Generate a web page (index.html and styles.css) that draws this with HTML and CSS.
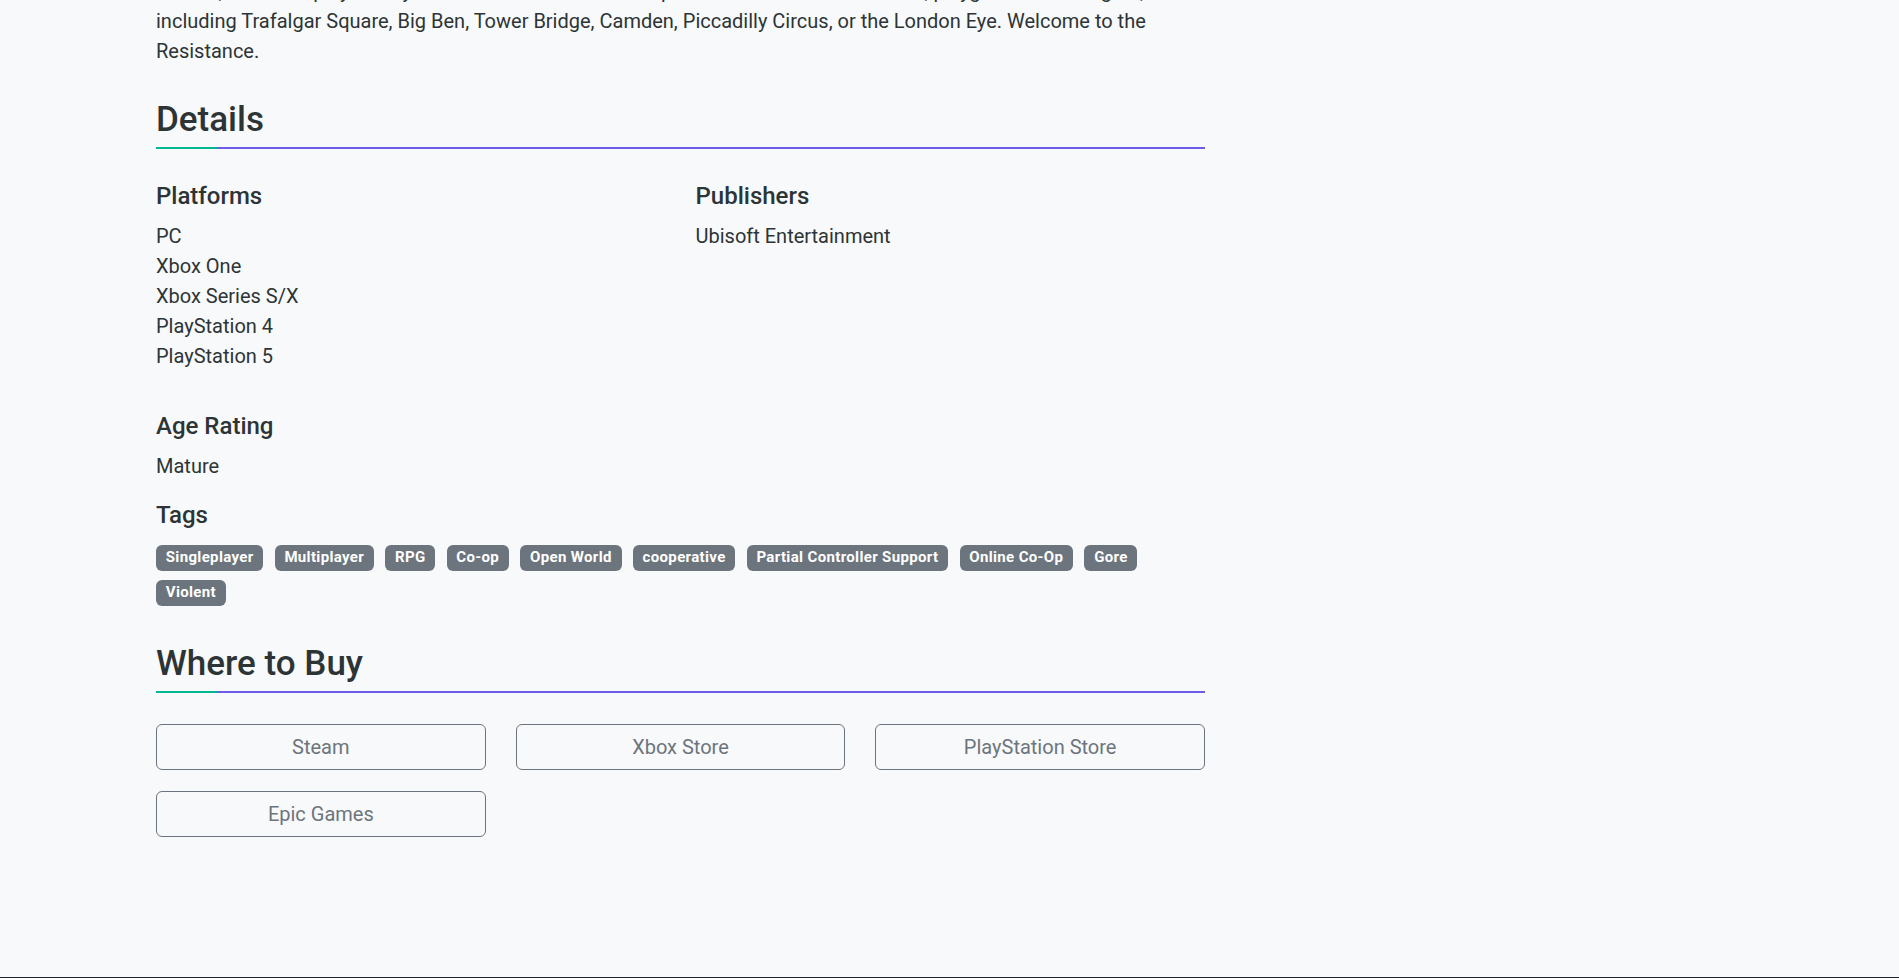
FILE: index.html
```html
<!DOCTYPE html>
<html lang="en">
<head>
<meta charset="utf-8">
<title>Watch Dogs: Legion</title>
<link rel="stylesheet" href="styles.css">
</head>
<body>
<main class="page">
  <section class="about">
    <p class="desc">Recruit, hack and play as anyone in a near-future London packed with iconic landmarks, playgrounds and sights,<br>including Trafalgar Square, Big Ben, Tower Bridge, Camden, Piccadilly Circus, or the London Eye. Welcome to the<br>Resistance.</p>
  </section>

  <section class="details">
    <h2 class="section-title">Details</h2>
    <div class="detail-grid">
      <div class="detail-block">
        <h4 class="detail-title">Platforms</h4>
        <ul class="detail-list">
          <li>PC</li>
          <li>Xbox One</li>
          <li>Xbox Series S/X</li>
          <li>PlayStation 4</li>
          <li>PlayStation 5</li>
        </ul>
      </div>
      <div class="detail-block">
        <h4 class="detail-title">Publishers</h4>
        <ul class="detail-list">
          <li>Ubisoft Entertainment</li>
        </ul>
      </div>
    </div>
    <div class="detail-block age">
      <h4 class="detail-title">Age Rating</h4>
      <p class="detail-text">Mature</p>
    </div>
    <div class="detail-block tags-block">
      <h4 class="detail-title">Tags</h4>
      <div class="tags">
        <span class="badge">Singleplayer</span>
        <span class="badge">Multiplayer</span>
        <span class="badge">RPG</span>
        <span class="badge">Co-op</span>
        <span class="badge">Open World</span>
        <span class="badge">cooperative</span>
        <span class="badge">Partial Controller Support</span>
        <span class="badge">Online Co-Op</span>
        <span class="badge">Gore</span>
        <span class="badge">Violent</span>
      </div>
    </div>
  </section>

  <section class="buy">
    <h2 class="section-title">Where to Buy</h2>
    <div class="stores">
      <a class="store-btn" href="#">Steam</a>
      <a class="store-btn" href="#">Xbox Store</a>
      <a class="store-btn" href="#">PlayStation Store</a>
      <a class="store-btn" href="#">Epic Games</a>
    </div>
  </section>
</main>
<footer class="site-footer"></footer>
</body>
</html>
```

FILE: styles.css
```css
* { box-sizing: border-box; }

html, body {
  margin: 0;
  padding: 0;
}

body {
  background: #f8f9fa;
  color: #2d3436;
  font-family: "Segoe UI", Roboto, "Noto Sans", "Liberation Sans", sans-serif;
  font-size: 20px;
  line-height: 30px;
}

.page {
  width: 1049px;
  margin-left: 156px;
  margin-top: -24.4px;
}

.desc {
  margin: 0;
  white-space: nowrap;
}

.section-title {
  margin: 0;
  font-size: 35px;
  line-height: 42px;
  font-weight: 500;
  padding-bottom: 8px;
  color: #2d3436;
  background: linear-gradient(to right, #00b894 0, #00b894 61px, #6c5ce7 61px, #6c5ce7 100%) left bottom / 100% 2px no-repeat;
}

.details .section-title {
  margin-top: 33.4px;
}

.detail-grid {
  display: grid;
  grid-template-columns: 1fr 1fr;
  column-gap: 30px;
  margin-top: 32.7px;
}

.detail-title {
  margin: 0;
  font-size: 24px;
  line-height: 28.8px;
  font-weight: 500;
}

.detail-list {
  list-style: none;
  margin: 10.5px 0 0;
  padding: 0;
}

.detail-text {
  margin: 10.6px 0 0;
}

.age {
  margin-top: 40.6px;
}

.tags-block {
  margin-top: 20.3px;
}

.tags {
  display: flex;
  flex-wrap: wrap;
  column-gap: 11.3px;
  row-gap: 9.5px;
  margin-top: 15px;
}

.badge {
  display: inline-block;
  background: #6c757d;
  color: #fff;
  font-size: 15px;
  line-height: 15px;
  font-weight: 700;
  letter-spacing: 0.35px;
  padding: 5.25px 9.75px;
  border-radius: 6px;
  white-space: nowrap;
}

.buy .section-title {
  margin-top: 37.5px;
}

.stores {
  display: grid;
  grid-template-columns: repeat(3, 1fr);
  column-gap: 30px;
  row-gap: 21px;
  margin-top: 30.5px;
}

.store-btn {
  display: block;
  height: 46px;
  padding: 7px 12px;
  border: 1px solid #6c757d;
  border-radius: 6px;
  color: #6c757d;
  text-align: center;
  text-decoration: none;
  font-size: 20px;
  line-height: 30px;
}

.site-footer {
  margin-top: 140px;
  height: 120px;
  background: #212529;
}
```
